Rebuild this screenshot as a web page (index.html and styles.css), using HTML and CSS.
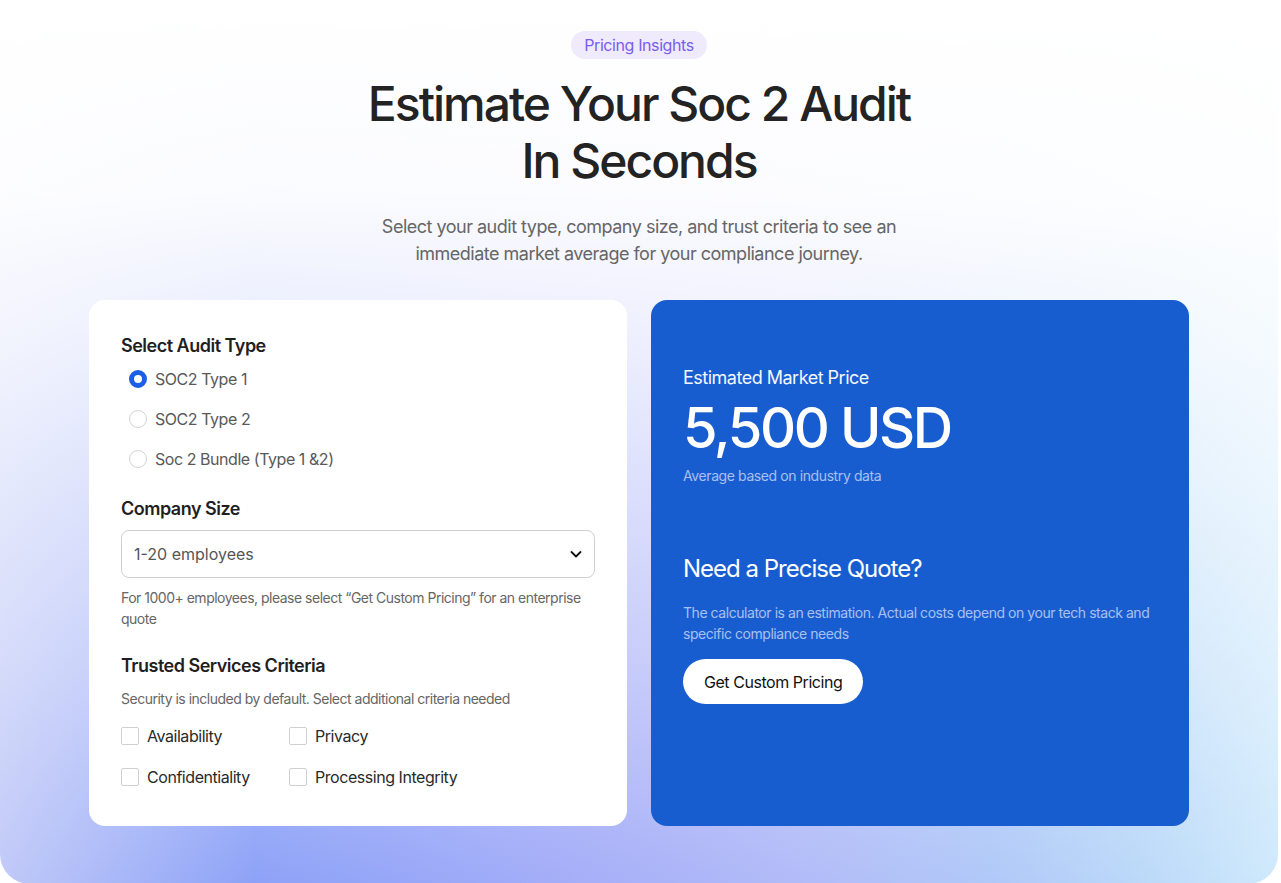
FILE: index.html
```html
<!DOCTYPE html>
<html lang="en">
<head>
<meta charset="utf-8">
<title>SOC 2 Audit Pricing</title>
<link rel="stylesheet" href="styles.css">
</head>
<body>
<section class="hero">
  <span class="badge">Pricing Insights</span>
  <h1 class="title">Estimate Your Soc 2 Audit<br>In Seconds</h1>
  <p class="lead">Select your audit type, company size, and trust criteria to see an immediate market average for your compliance journey.</p>

  <div class="cards">
    <div class="card form-card">
      <h2 class="group-title">Select Audit Type</h2>
      <div class="radios">
        <label class="radio-row"><span class="radio checked"></span><span class="radio-label">SOC2 Type 1</span></label>
        <label class="radio-row"><span class="radio"></span><span class="radio-label">SOC2 Type 2</span></label>
        <label class="radio-row"><span class="radio"></span><span class="radio-label">Soc 2 Bundle (Type 1 &amp;2)</span></label>
      </div>

      <h2 class="group-title size-title">Company Size</h2>
      <div class="select">
        <span class="select-value">1-20 employees</span>
        <svg class="chev" width="14" height="14" viewBox="0 0 14 14"><path d="M2.5 5 L7 9.5 L11.5 5" fill="none" stroke="#111" stroke-width="1.8" stroke-linecap="round" stroke-linejoin="round"/></svg>
      </div>
      <p class="hint">For 1000+ employees, please select “Get Custom Pricing” for an enterprise quote</p>

      <h2 class="group-title tsc-title">Trusted Services Criteria</h2>
      <p class="hint sub">Security is included by default. Select additional criteria needed</p>
      <div class="checks">
        <label class="check-row"><span class="box"></span><span class="check-label">Availability</span></label>
        <label class="check-row"><span class="box"></span><span class="check-label">Privacy</span></label>
        <label class="check-row"><span class="box"></span><span class="check-label">Confidentiality</span></label>
        <label class="check-row"><span class="box"></span><span class="check-label">Processing Integrity</span></label>
      </div>
    </div>

    <div class="card price-card">
      <p class="price-label">Estimated Market Price</p>
      <p class="price">5,500 USD</p>
      <p class="price-note">Average based on industry data</p>

      <h3 class="quote-title">Need a Precise Quote?</h3>
      <p class="quote-text">The calculator is an estimation. Actual costs depend on your tech stack and specific compliance needs</p>
      <button class="cta">Get Custom Pricing</button>
    </div>
  </div>
</section>
</body>
</html>
```

FILE: styles.css
```css
* { box-sizing: border-box; }

html, body {
  margin: 0;
  padding: 0;
  background: #ffffff;
}

body {
  font-family: Inter, "Noto Sans", "Liberation Sans", sans-serif;
  color: #222;
  letter-spacing: -0.35px;
}

.hero {
  width: 1278px;
  min-height: 884px;
  border-radius: 0 0 30px 30px;
  display: flex;
  flex-direction: column;
  align-items: center;
  padding-top: 31px;
  padding-bottom: 57px;
  background:
    linear-gradient(180deg, #ffffff 0%, rgba(255,255,255,0.96) 22%, rgba(255,255,255,0.78) 40%, rgba(255,255,255,0.35) 75%, rgba(255,255,255,0) 100%),
    linear-gradient(90deg, #c0c9f8 0%, #8da2f7 20%, #98a7f8 32%, #a8b0f8 48%, #b2bbf8 62%, #b0c9f8 78%, #bcdaf9 90%, #cfe9fc 100%);
}

.badge {
  display: inline-block;
  height: 28px;
  line-height: 28px;
  padding: 0 13px;
  border-radius: 14px;
  background: #efebfd;
  color: #7a5cf0;
  font-size: 16px;
  font-weight: 400;
  letter-spacing: -0.4px;
}

.title {
  margin: 16px 0 0;
  font-size: 48px;
  line-height: 57px;
  font-weight: 500;
  letter-spacing: -2px;
  text-align: center;
  color: #232323;
}

.lead {
  margin: 24px 0 0;
  width: 530px;
  font-size: 18px;
  line-height: 27px;
  color: #666;
  text-align: center;
  letter-spacing: -0.5px;
}

.cards {
  margin-top: 33px;
  display: grid;
  grid-template-columns: 538px 538px;
  gap: 24px;
}

.card {
  border-radius: 16px;
  height: 526px;
}

.form-card {
  background: #ffffff;
  padding: 32px 32px 36px;
}

.group-title {
  margin: 0;
  font-size: 18px;
  line-height: 27px;
  font-weight: 600;
  color: #1f1f1f;
  letter-spacing: -0.5px;
}

.radios {
  display: flex;
  flex-direction: column;
  gap: 16px;
  margin-top: 8px;
  padding-left: 8px;
}

.radio-row {
  display: flex;
  align-items: center;
  gap: 8px;
  height: 24px;
}

.radio {
  width: 18px;
  height: 18px;
  border-radius: 50%;
  border: 1px solid #d2d2d2;
  background: #fff;
  flex: none;
}

.radio.checked {
  border: 5px solid #1a5fe6;
}

.radio-label {
  font-size: 16px;
  color: #595959;
  letter-spacing: -0.45px;
}

.size-title { margin-top: 24px; }

.select {
  margin-top: 8px;
  height: 48px;
  border: 1px solid #cfcfcf;
  border-radius: 8px;
  display: flex;
  align-items: center;
  justify-content: space-between;
  padding: 0 11px 0 12px;
}

.select-value {
  font-size: 16px;
  color: #555;
  letter-spacing: 0;
}

.hint {
  margin: 9px 0 0;
  font-size: 14px;
  line-height: 21px;
  color: #666;
  letter-spacing: -0.5px;
}

.tsc-title { margin-top: 23px; }

.hint.sub { margin-top: 9px; }

.checks {
  margin-top: 15px;
  display: grid;
  grid-template-columns: 168px auto;
  row-gap: 17px;
}

.check-row {
  display: flex;
  align-items: center;
  gap: 8px;
  height: 24px;
}

.box {
  width: 18px;
  height: 18px;
  border: 1px solid #d0d0d0;
  border-radius: 2px;
  background: #fff;
  flex: none;
}

.check-label {
  font-size: 16px;
  color: #2a2a2a;
  letter-spacing: -0.45px;
}

.price-card {
  background: #185dcf;
  padding: 64px 32px 32px;
  color: #ffffff;
}

.price-label {
  margin: 0;
  font-size: 18px;
  line-height: 27px;
  font-weight: 400;
  color: #f4f7ff;
  letter-spacing: -0.5px;
}

.price {
  margin: 0;
  font-size: 56px;
  line-height: 74px;
  font-weight: 500;
  letter-spacing: -2.4px;
  color: #ffffff;
}

.price-note {
  margin: 0;
  font-size: 14px;
  line-height: 21px;
  color: #a9c0f0;
  letter-spacing: -0.4px;
}

.quote-title {
  margin: 65px 0 0;
  font-size: 24px;
  line-height: 36px;
  font-weight: 400;
  letter-spacing: -1px;
  color: #ffffff;
}

.quote-text {
  margin: 15px 0 0;
  font-size: 14px;
  line-height: 21px;
  color: #a9c0f0;
  letter-spacing: -0.45px;
}

.cta {
  margin-top: 15px;
  height: 45px;
  padding: 0 21px;
  border: none;
  border-radius: 23px;
  background: #ffffff;
  color: #111;
  font-family: Inter, "Noto Sans", "Liberation Sans", sans-serif;
  font-size: 16px;
  letter-spacing: -0.45px;
  cursor: pointer;
}
```
